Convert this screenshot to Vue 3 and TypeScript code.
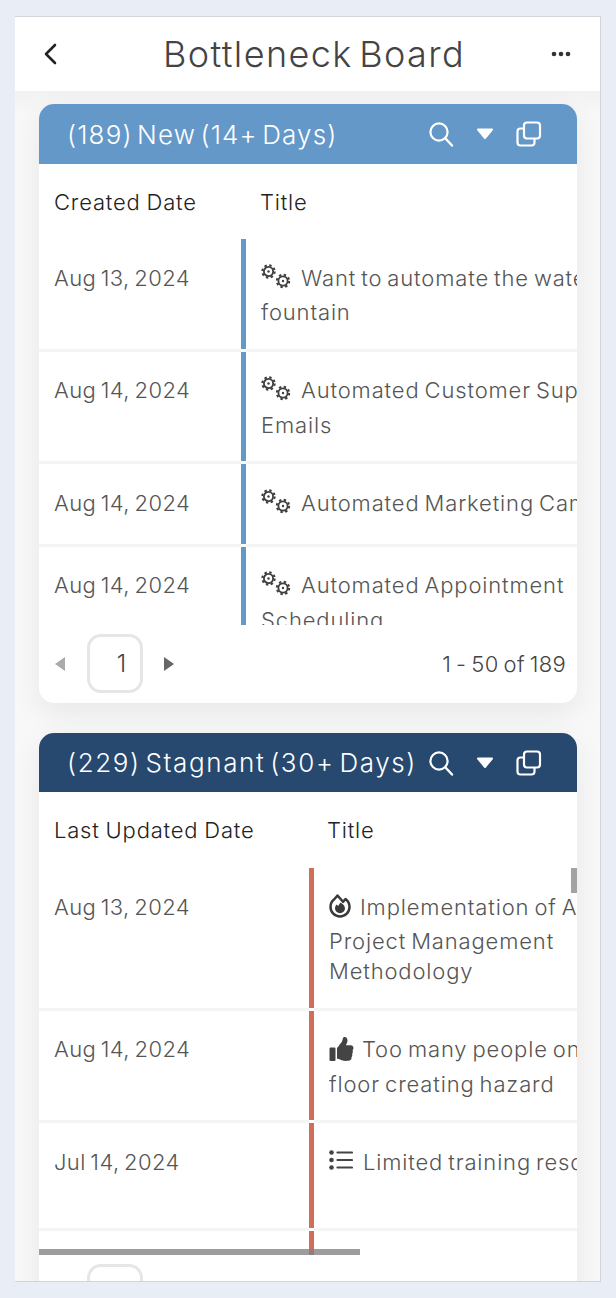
<script setup lang="ts">
interface Row { date: string; lines: string[]; icon: string; height: number; tight: boolean }
interface Board {
  title: string; dateLabel: string; tone: string; dateWidth: number; range: string; bodyHeight: number; rows: Row[]
}
const boards: Board[] = [
  {
    title: '(189) New (14+ Days)', dateLabel: 'Created Date', tone: 'blue', dateWidth: 202, range: '1 - 50 of 189', bodyHeight: 386,
    rows: [
      { date: 'Aug 13, 2024', lines: ['Want to automate the water', 'fountain'], icon: 'gears', height: 113, tight: false },
      { date: 'Aug 14, 2024', lines: ['Automated Customer Support', 'Emails'], icon: 'gears', height: 112, tight: true },
      { date: 'Aug 14, 2024', lines: ['Automated Marketing Campaigns'], icon: 'gears', height: 83, tight: false },
      { date: 'Aug 14, 2024', lines: ['Automated Appointment', 'Scheduling'], icon: 'gears', height: 113, tight: true }
    ]
  },
  {
    title: '(229) Stagnant (30+ Days)', dateLabel: 'Last Updated Date', tone: 'navy', dateWidth: 270, range: '', bodyHeight: 387,
    rows: [
      { date: 'Aug 13, 2024', lines: ['Implementation of Agile', 'Project Management', 'Methodology'], icon: 'flame', height: 143, tight: false },
      { date: 'Aug 14, 2024', lines: ['Too many people on the', 'floor creating hazard'], icon: 'thumb', height: 112, tight: true },
      { date: 'Jul 14, 2024', lines: ['Limited training resources'], icon: 'list', height: 108, tight: false },
      { date: 'Aug 14, 2024', lines: [''], icon: 'none', height: 113, tight: false }
    ]
  }
]
</script>

<template>
  <div class="page">
    <div class="frame">
      <header class="topbar">
        <svg class="back" viewBox="0 0 14 22" width="14" height="22"><path d="M12 2 3 11l9 9" fill="none" stroke="#222" stroke-width="2.6" stroke-linecap="round" stroke-linejoin="round" /></svg>
        <h1>Bottleneck Board</h1>
        <svg class="more" viewBox="0 0 20 6" width="20" height="6"><circle cx="3" cy="3" r="2.3" /><circle cx="10" cy="3" r="2.3" /><circle cx="17" cy="3" r="2.3" /></svg>
      </header>
      <main class="content">
        <section v-for="b in boards" :key="b.title" class="card" :class="b.tone">
          <div class="card-head">
            <h2>{{ b.title }}</h2>
            <div class="tools">
              <svg viewBox="0 0 26 26" width="26" height="26"><circle cx="11" cy="11" r="8.6" fill="none" stroke="#fff" stroke-width="2.2" /><path d="m17.5 17.5 6.5 7" stroke="#fff" stroke-width="2.4" stroke-linecap="round" /></svg>
              <svg viewBox="0 0 18 12" width="18" height="12"><path d="M2 1.5h14L9 10z" fill="#fff" stroke="#fff" stroke-width="2" stroke-linejoin="round" /></svg>
              <svg viewBox="0 0 26 26" width="26" height="26"><rect x="8" y="1.5" width="16" height="16" rx="3" fill="none" stroke="#fff" stroke-width="2.2" /><path d="M8 7.5H4.5a3 3 0 0 0-3 3v11a3 3 0 0 0 3 3h11a3 3 0 0 0 3-3V18" fill="none" stroke="#fff" stroke-width="2.2" /></svg>
            </div>
          </div>
          <div class="columns">
            <div class="date-col" :style="{ width: b.dateWidth + 'px' }">{{ b.dateLabel }}</div>
            <div class="title-head">Title</div>
          </div>
          <div class="table-body" :style="{ height: b.bodyHeight + 'px' }">
            <div v-for="(r, i) in b.rows" :key="i" class="row" :class="{ tight: r.tight }" :style="{ height: r.height + 'px' }">
              <div class="date-cell" :style="{ width: b.dateWidth + 'px' }">{{ r.date }}</div>
              <div class="title-cell">
                <div v-for="(line, j) in r.lines" :key="j" :class="j === 0 ? 'first-line' : 'next-line'">
                  <template v-if="j === 0">
                    <svg v-if="r.icon === 'gears'" class="ico gears" viewBox="0 0 30 25" width="30" height="25">
                      <g fill="none" stroke="#3f3f3f">
                        <circle cx="7.5" cy="7.5" r="4.6" stroke-width="1.8" />
                        <circle cx="7.5" cy="7.5" r="6.2" stroke-width="2" stroke-dasharray="2.4 2.47" />
                        <circle cx="22" cy="17" r="4.6" stroke-width="1.8" />
                        <circle cx="22" cy="17" r="6.2" stroke-width="2" stroke-dasharray="2.4 2.47" />
                      </g>
                      <circle cx="7.5" cy="7.5" r="1.2" fill="#3f3f3f" />
                      <circle cx="22" cy="17" r="1.2" fill="#3f3f3f" />
                    </svg>
                    <svg v-else-if="r.icon === 'flame'" class="ico flame" viewBox="0 0 22 24" width="22" height="24">
                      <path d="M5.5 5C3 6.800 1.500 9.500 1.500 13a9.500 9.500 0 1 0 19 0c0-3.500-1.500-6.200-4-8l-2.500 2.800L8.500 1.500z" fill="none" stroke="#3a3a3a" stroke-width="2.500" stroke-linejoin="round" />
                      <path d="M11.500 8.500c2.500 1.500 4.500 3.500 4.500 5.800a5 5 0 0 1-10 0c0-1.600.7-2.800 1.700-3.800l1.400 1.500z" fill="#3a3a3a" />
                    </svg>
                    <svg v-else-if="r.icon === 'thumb'" class="ico thumb" viewBox="0 0 512 512" width="25" height="24">
                      <rect x="0" y="224" width="128" height="288" rx="24" fill="#444" />
                      <path d="M384 81.452c0 42.416-25.97 66.208-33.277 94.548h101.723c33.397 0 59.397 27.746 59.553 58.098.084 17.938-7.546 37.249-19.439 49.197l-.11.11c9.836 23.337 8.237 56.037-9.308 79.469 8.681 25.895-.069 57.704-16.382 74.757 4.298 17.598 2.244 32.575-6.148 44.632C440.202 511.587 389.616 512 346.839 512l-2.845-.001c-48.287-.017-87.806-17.598-119.56-31.725-15.957-7.099-36.821-15.887-52.651-16.178-6.54-.12-11.783-5.457-11.783-11.998v-213.77c0-3.2 1.282-6.271 3.558-8.521 39.614-39.144 56.648-80.587 89.117-113.111 14.804-14.832 20.188-37.236 25.393-58.902C282.515 39.293 291.817 0 312 0c24 0 72 8 72 81.452z" fill="#444" />
                    </svg>
                    <svg v-else-if="r.icon === 'list'" class="ico list" viewBox="0 0 24 20" width="24" height="20">
                      <g fill="#444"><circle cx="2.500" cy="2.500" r="2.300" /><circle cx="2.500" cy="10" r="2.300" /><circle cx="2.500" cy="17.500" r="2.300" /></g>
                      <path d="M8.500 2.500H23M8.500 10H23M8.500 17.500H23" stroke="#444" stroke-width="2.200" stroke-linecap="round" />
                    </svg>
                  </template>
                  <span>{{ line }}</span>
                </div>
              </div>
            </div>
            <span v-if="b.tone === 'navy'" class="thumb-v"></span>
            <span v-if="b.tone === 'navy'" class="thumb-h"></span>
          </div>
          <div class="pager">
            <div class="pager-left">
              <span class="tri left"></span>
              <span class="page-btn">{{ b.range ? '1' : '' }}</span>
              <span class="tri right"></span>
            </div>
            <div class="range">{{ b.range }}</div>
          </div>
        </section>
      </main>
    </div>
  </div>
</template>

<style>
html, body { margin: 0; background: #e9edf6; }
</style>

<style scoped>
.page {
  width: 616px;
  height: 1298px;
  padding: 16px 15px 16px 15px;
  box-sizing: border-box;
  overflow: hidden;
  font-family: Inter, "Noto Sans", sans-serif;
  background: #e9edf6;
}
.frame {
  width: 586px;
  height: 1266px;
  box-sizing: border-box;
  border: 1px solid #d2d4da;
  border-left: 0;
  display: flex;
  flex-direction: column;
  overflow: hidden;
  background: #f9f9fa;
}
.topbar {
  height: 74px;
  flex: none;
  background: #fff;
  display: flex;
  align-items: center;
  padding: 0 29px 0 28px;
  position: relative;
}
.topbar h1 {
  flex: 1;
  margin: 0;
  text-align: center;
  font-size: 36px;
  font-weight: 300;
  color: #444;
  letter-spacing: 1.4px;
  word-spacing: -5px;
  white-space: nowrap;
  transform: translateX(10px);
}
.back { flex: none; }
.more { flex: none; fill: #333; }
.content {
  flex: 1;
  min-height: 0;
  padding: 13px 23px 0 24px;
  display: flex;
  flex-direction: column;
  gap: 30px;
  overflow: hidden;
  background: linear-gradient(#f1f1f2, #f8f8f9 24px);
}
.card {
  flex: none;
  background: #fff;
  border-radius: 15px;
  box-shadow: 0 10px 30px rgba(0, 0, 0, 0.07);
  overflow: hidden;
  width: 538px;
}
.card-head {
  height: 60px;
  display: flex;
  align-items: center;
  justify-content: space-between;
  padding: 0 35px 0 28px;
  color: #fff;
}
.blue .card-head { background: #6498c9; }
.navy .card-head { background: #27486f; height: 59px; }
.card-head h2 {
  margin: 0;
  font-size: 26px;
  font-weight: 300;
  white-space: nowrap;
  letter-spacing: 1.15px;
  word-spacing: -4px;
}
.navy .card-head h2 { letter-spacing: 1.6px; }
.tools { display: flex; align-items: center; gap: 22px; flex: none; }
.tools svg { display: block; }
.columns {
  height: 75px;
  display: flex;
  align-items: center;
  font-size: 22px;
  font-weight: 300;
  color: #222;
  white-space: nowrap;
  letter-spacing: 0.8px;
  word-spacing: -1px;
}
.navy .columns { height: 76px; }
.date-col { padding-left: 15px; box-sizing: border-box; flex: none; }
.navy .date-col { margin-top: -1px; }
.title-head { padding-left: 19px; }
.navy .title-head { padding-left: 18px; margin-top: -1px; }
.table-body { position: relative; overflow: hidden; }
.row {
  display: flex;
  box-sizing: border-box;
  border-bottom: 3px solid #f4f4f5;
  font-size: 22px;
  font-weight: 300;
  color: #555;
  white-space: nowrap;
}
.date-cell {
  flex: none;
  box-sizing: border-box;
  padding: 20px 0 0 15px;
  height: 58px;
  line-height: 38px;
  letter-spacing: 0.4px;
  word-spacing: -2px;
}
.title-cell {
  flex: 1;
  min-width: 0;
  padding: 20px 0 0 15px;
  position: relative;
  overflow: visible;
  letter-spacing: 0.85px;
  word-spacing: -2px;
}
.tight .date-cell,
.tight .title-cell { padding-top: 19px; }
.blue .title-cell { border-left: 5px solid #6499cb; }
.navy .title-cell { border-left: 5px solid #cf6f5b; }
.title-cell::after {
  content: "";
  position: absolute;
  left: -5px;
  bottom: -3px;
  width: 5px;
  height: 3px;
  background: #fff;
}
.first-line {
  height: 38px;
  line-height: 38px;
  display: flex;
  align-items: center;
}
.next-line { height: 30px; line-height: 30px; }
.tight .next-line:nth-child(2) { line-height: 32px; }
.ico { flex: none; display: block; }
.gears { margin-right: 10px; margin-top: -3px; }
.flame { margin-right: 9px; margin-top: -3px; }
.thumb { margin-right: 8px; }
.list { margin-right: 10px; margin-top: -4px; }
.thumb-v {
  position: absolute;
  top: -1px;
  right: 0;
  width: 6px;
  height: 26px;
  background: #a3a3a3;
}
.thumb-h {
  position: absolute;
  bottom: 0;
  left: 0;
  width: 321px;
  height: 6px;
  background: rgba(130, 130, 130, 0.78);
}
.pager {
  height: 78px;
  display: flex;
  justify-content: space-between;
  padding: 9px 11px 0 16px;
  box-sizing: border-box;
}
.pager-left { display: flex; align-items: center; height: 59px; gap: 22px; }
.tri { width: 0; height: 0; border-top: 7px solid transparent; border-bottom: 7px solid transparent; }
.tri.left { border-right: 10px solid #aaa; }
.tri.right { border-left: 10px solid #666; margin-left: -1px; }
.page-btn {
  width: 56px;
  height: 59px;
  box-sizing: border-box;
  border: 3px solid #e6e6e6;
  border-radius: 14px;
  display: flex;
  align-items: center;
  justify-content: center;
  font-size: 24px;
  font-weight: 300;
  color: #444;
  padding-left: 13px;
}
.range {
  height: 59px;
  line-height: 61px;
  font-size: 22px;
  font-weight: 300;
  color: #444;
  white-space: nowrap;
  letter-spacing: 0.3px;
  word-spacing: -1.5px;
}
</style>
